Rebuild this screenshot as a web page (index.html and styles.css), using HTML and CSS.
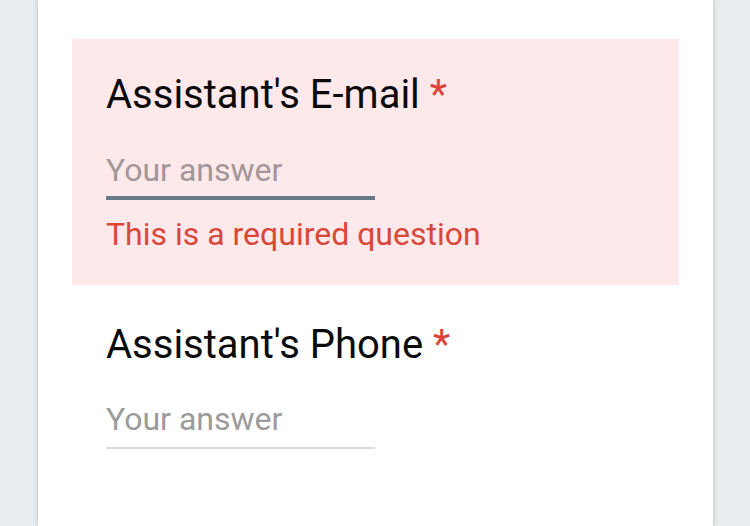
FILE: index.html
```html
<!DOCTYPE html>
<html lang="en">
<head>
<meta charset="utf-8">
<title>Form</title>
<link rel="stylesheet" href="styles.css">
</head>
<body>
<div class="page">
  <main class="card">
    <section class="question question-error">
      <div class="q-title">Assistant's E-mail <span class="req">*</span></div>
      <div class="answer answer-focused">Your answer</div>
      <div class="error-msg">This is a required question</div>
    </section>
    <section class="question question-plain">
      <div class="q-title">Assistant's Phone <span class="req">*</span></div>
      <div class="answer answer-idle">Your answer</div>
    </section>
  </main>
</div>
</body>
</html>
```

FILE: styles.css
```css
html, body {
  margin: 0;
  padding: 0;
  height: 100%;
}
body {
  background: #e9edf0;
  font-family: Roboto, "Noto Sans", "Liberation Sans", sans-serif;
  overflow: hidden;
}
.page {
  padding: 0 37px 0 38px;
  height: 100%;
}
.card {
  background: #ffffff;
  height: 100%;
  box-sizing: border-box;
  padding: 39px 34px 0 34px;
  box-shadow: 0 0 5px rgba(0, 0, 0, 0.22);
  display: flex;
  flex-direction: column;
}
.question {
  padding: 32px 34px 31px 34px;
  display: flex;
  flex-direction: column;
  align-items: flex-start;
}
.question-error {
  background: #fde8ea;
}
.question-plain {
  margin-top: 4px;
  padding-top: 32px;
}
.q-title {
  font-size: 40px;
  line-height: 48px;
  color: #0b0b0b;
}
.req {
  color: #db4437;
}
.answer {
  margin-top: 30px;
  width: 269px;
  font-size: 32px;
  line-height: 40px;
  color: #9b9b9b;
}
.answer-focused {
  margin-top: 31px;
  color: #a19698;
  padding-bottom: 6px;
  border-bottom: 4px solid #657b8a;
}
.answer-idle {
  padding-bottom: 8px;
  border-bottom: 2px solid #dadada;
}
.error-msg {
  margin-top: 14px;
  font-size: 32px;
  line-height: 40px;
  color: #d9473b;
}
```
